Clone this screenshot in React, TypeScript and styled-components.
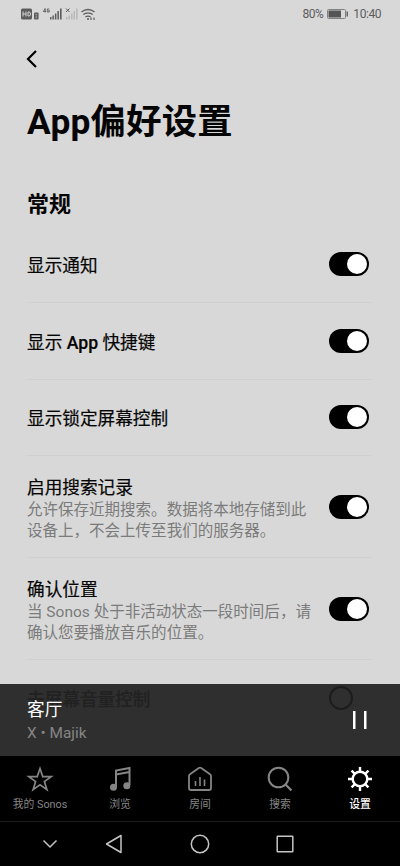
import React from 'react';
import styled, { createGlobalStyle, css } from 'styled-components';

const Global = createGlobalStyle`
  *, *::before, *::after { box-sizing: border-box; }
  body { margin: 0; background: #d8d8d8; }
`;

const Screen = styled.div`
  width: 400px;
  height: 866px;
  display: flex;
  flex-direction: column;
  overflow: hidden;
  background: #d8d8d8;
  color: #050505;
  font-family: Roboto, 'Noto Sans CJK SC', sans-serif;
`;

const StatusBar = styled.header`
  height: 28px;
  flex: none;
  display: flex;
  justify-content: space-between;
  padding: 0 19px 0 20px;
  color: #5c5c5c;
`;

const StatusGroup = styled.div`
  display: flex;
  align-items: center;
  gap: 4px;
  font-size: 12px;
  line-height: 28px;
  letter-spacing: -0.45px;
`;

const TopNav = styled.nav`
  height: 62px;
  flex: none;
  display: flex;
  align-items: center;
  padding: 0 25px;
`;

const BackButton = styled.button`
  display: flex;
  padding: 0;
  border: 0;
  background: none;
  color: #000;
`;

const Body = styled.div`
  flex: 1;
  min-height: 0;
  position: relative;
  overflow: hidden;
`;

const PageTitle = styled.h1`
  margin: 0;
  padding: 7px 27px 0;
  height: 92px;
  font-size: 35.3px;
  line-height: 50px;
  font-weight: 700;
  letter-spacing: 0.25px;
  white-space: nowrap;
`;

const SectionTitle = styled.h2`
  margin: 0;
  padding: 1px 27px 0;
  height: 44.5px;
  font-size: 22px;
  line-height: 44px;
  font-weight: 700;
`;

const Row = styled.div<{ $tall?: boolean; $off?: boolean }>`
  height: ${(p) => (p.$tall ? 102 : 76.6)}px;
  margin: 0 28px 0 27px;
  display: flex;
  align-items: center;
  justify-content: space-between;
  border-bottom: 1px solid #d0d0d0;
  padding-right: 3px;
  color: ${(p) => (p.$off ? '#808080' : '#050505')};
`;

const RowText = styled.div`
  padding-top: 4px;
  white-space: nowrap;
`;

const RowTitle = styled.div<{ $strong?: boolean }>`
  font-size: 17.65px;
  line-height: 24px;
  font-weight: ${(p) => (p.$strong ? 500 : 400)};
  -webkit-text-stroke: 0.2px currentColor;
`;

const LatinWord = styled.span`
  font-weight: 500;
`;

const RowNote = styled.div`
  font-size: 15.52px;
  line-height: 20.8px;
  color: #7b7b7b;
`;

const Knob = styled.span<{ $on: boolean }>`
  width: ${(p) => (p.$on ? 20 : 24)}px;
  height: ${(p) => (p.$on ? 20 : 24)}px;
  border-radius: 50%;
  ${(p) =>
    p.$on
      ? css`background: #fff;`
      : css`border: 2px solid #606060;`}
`;

const Track = styled.span<{ $on: boolean }>`
  flex: none;
  width: 40px;
  height: 24px;
  border-radius: 12px;
  display: flex;
  align-items: center;
  justify-content: ${(p) => (p.$on ? 'flex-end' : 'flex-start')};
  padding: ${(p) => (p.$on ? '0 2px' : '0')};
  background: ${(p) => (p.$on ? '#000' : 'transparent')};
`;

const MiniPlayer = styled.section`
  position: absolute;
  left: 0;
  right: 0;
  bottom: 0;
  height: 72px;
  display: flex;
  align-items: center;
  justify-content: space-between;
  padding: 0 32px 0 27px;
  background: rgba(15, 15, 15, 0.845);
  color: #fff;
`;

const PlayerText = styled.div`
  padding-top: 3px;
`;

const RoomName = styled.div`
  font-size: 17.65px;
  line-height: 24px;
`;

const TrackName = styled.div`
  font-size: 15.4px;
  line-height: 23px;
  color: #858585;
`;

const TabBar = styled.nav`
  height: 65px;
  flex: none;
  display: grid;
  grid-template-columns: repeat(5, 1fr);
  background: #000;
`;

const Tab = styled.div<{ $active?: boolean }>`
  display: flex;
  flex-direction: column;
  align-items: center;
  padding-top: 9px;
  color: ${(p) => (p.$active ? '#fff' : '#858585')};
  font-size: 10.8px;
  line-height: 16px;
  font-weight: ${(p) => (p.$active ? 500 : 400)};
  white-space: nowrap;

  svg { margin-bottom: 4px; }
`;

const SystemNav = styled.footer`
  height: 45px;
  flex: none;
  background: #000;
  border-top: 1px solid #1c1c1c;
  color: #c4c4c4;
  display: grid;
  grid-template-columns: 28px 44px 84px 88px 82px;
  align-items: center;
  justify-items: center;

  svg:first-child { grid-column: 2; }
`;

const line = { fill: 'none', stroke: 'currentColor', strokeWidth: 2 } as const;

const Toggle = ({ on }: { on: boolean }) => (
  <Track $on={on} role="switch" aria-checked={on}>
    <Knob $on={on} />
  </Track>
);

const SignalIcons = () => (
  <svg width="78" height="14" viewBox="0 0 78 14" fill="currentColor">
    <rect x="1" y="1.500" width="11" height="11" rx="1.500" />
    <path d="M3 4.500v5M6 4.500v5M3 7h3M8 5v4h1q1.500 0 1.500-2t-1.500-2z" fill="none" stroke="#d8d8d8" strokeWidth="1" />
    <rect x="14" y="5.500" width="4.600" height="7" rx="1" />
    <path d="M15.600 7.500h1.500M15.600 9.200h1.500M15.600 10.800h1.500" stroke="#d8d8d8" strokeWidth=".6" />
    <path d="M25 1.500l-1.600 3h2.600M25.200 1.500v4M29.300 2h-2v3h2V3.500h-1" fill="none" stroke="currentColor" strokeWidth=".9" />
    <path d="M30 10h1.500v2.500H30zM32.400 8.500h1.500v4h-1.500zM34.900 6.500h1.500v6h-1.500zM37.400 4h1.500v8.500h-1.500zM40 1.500h1.600v11H40z" />
    <path d="M46 1.500L49.500 5M49.500 1.500L46 5" stroke="currentColor" strokeWidth="1" />
    <path opacity=".25" d="M46 10h1.500v2.500H46zM48.500 8.500H50v4h-1.500zM51 6.500h1.500v6H51zM53.500 4H55v8.500h-1.500zM56.100 1.500h1.500v11h-1.500z" />
    <path d="M61.500 5q6.500-5 13 0M63.300 7.600q4.700-3.600 9.400 0M65.400 10q2.600-1.800 5.200 0" fill="none" stroke="currentColor" strokeWidth="1.300" />
    <circle cx="68" cy="12" r="1" />
    <path d="M71 10.500v2.500M74 10.500v2.500" stroke="currentColor" strokeWidth="1.200" />
  </svg>
);

const BatteryIcon = () => (
  <svg width="22" height="10" viewBox="0 0 22 10">
    <rect x=".5" y=".5" width="18" height="9" rx="1" fill="none" stroke="#808080" />
    <rect x="1.500" y="1.500" width="12.500" height="7" fill="#555" />
    <rect x="19.500" y="2.500" width="1.500" height="5" fill="#666" />
  </svg>
);

const StarIcon = () => (
  <svg width="28" height="28" viewBox="0 0 28 28" {...line}>
    <path d="M14 3.600l2.700 8h8.500l-6.800 5 2.500 8.100-6.900-4.900-6.900 4.900 2.500-8.100-6.800-5h8.500z" strokeWidth="1.700" />
  </svg>
);

const MusicIcon = () => (
  <svg width="28" height="28" viewBox="0 0 28 28">
    <path d="M10 22V5.500L23.500 3v17M10 9.500L23.500 7" {...line} />
    <circle cx="7.500" cy="22.300" r="3.500" fill="currentColor" />
    <circle cx="20.800" cy="20.700" r="3.500" fill="currentColor" />
  </svg>
);

const RoomsIcon = () => (
  <svg width="28" height="28" viewBox="0 0 28 28" {...line}>
    <path d="M3 11.200Q3 10 4 9.300L12.800 3Q14 2.300 15.200 3L24 9.300Q25 10 25 11.200V23Q25 25 23 25H5Q3 25 3 23z" strokeWidth="1.800" />
    <path d="M9.500 16v5M14 12v9M18.500 14.500v6.500" strokeWidth="1.600" />
  </svg>
);

const SearchIcon = () => (
  <svg width="28" height="28" viewBox="0 0 28 28" {...line}>
    <circle cx="12.500" cy="12.500" r="9.800" />
    <path d="M19.500 19.500l6 6" strokeWidth="2.300" />
  </svg>
);

const GearIcon = () => (
  <svg width="28" height="28" viewBox="0 0 28 28" {...line} strokeWidth={2.4}>
    <circle cx="14" cy="14" r="7.300" />
    <path d="M14 2v5M14 21v5M2 14h5M21 14h5M5.600 5.600l3.200 3.200M19.200 19.200l3.200 3.200M22.400 5.600l-3.200 3.200M8.800 19.200l-3.200 3.200" />
  </svg>
);

const rows = [
  { title: '显示通知' },
  { title: <>显示 <LatinWord>App</LatinWord> 快捷键</> },
  { title: '显示锁定屏幕控制' },
  { title: '启用搜索记录', note: ['允许保存近期搜索。数据将本地存储到此', '设备上，不会上传至我们的服务器。'] },
  { title: '确认位置', note: ['当 Sonos 处于非活动状态一段时间后，请', '确认您要播放音乐的位置。'] },
  { title: '去屏幕音量控制', off: true },
] as { title: React.ReactNode; note?: string[]; off?: boolean }[];

const tabs = [
  { label: '我的 Sonos', Icon: StarIcon },
  { label: '浏览', Icon: MusicIcon },
  { label: '房间', Icon: RoomsIcon },
  { label: '搜索', Icon: SearchIcon },
  { label: '设置', Icon: GearIcon },
];

export default function App() {
  return (
    <Screen>
      <Global />
      <StatusBar>
        <StatusGroup><SignalIcons /></StatusGroup>
        <StatusGroup>
          <span>80%</span>
          <BatteryIcon />
          <span>10:40</span>
        </StatusGroup>
      </StatusBar>
      <TopNav>
        <BackButton aria-label="返回">
          <svg width="14" height="20" viewBox="0 0 14 20" {...line}>
            <path d="M11 2L3 10l8 8" strokeWidth="2.200" />
          </svg>
        </BackButton>
      </TopNav>
      <Body>
        <PageTitle>App偏好设置</PageTitle>
        <SectionTitle>常规</SectionTitle>
        {rows.map((row, index) => (
          <Row key={index} $tall={!!row.note} $off={row.off}>
            <RowText>
              <RowTitle $strong={row.off}>{row.title}</RowTitle>
              {row.note?.map((text) => <RowNote key={text}>{text}</RowNote>)}
            </RowText>
            <Toggle on={!row.off} />
          </Row>
        ))}
        <MiniPlayer>
          <PlayerText>
            <RoomName>客厅</RoomName>
            <TrackName>X • Majik</TrackName>
          </PlayerText>
          <svg width="16" height="20" viewBox="0 0 16 20" fill="#fff">
            <rect x="1" y="1" width="2.500" height="18" />
            <rect x="12" y="1" width="2.500" height="18" />
          </svg>
        </MiniPlayer>
      </Body>
      <TabBar>
        {tabs.map(({ label, Icon }) => (
          <Tab key={label} $active={label === '设置'}>
            <Icon />
            <span>{label}</span>
          </Tab>
        ))}
      </TabBar>
      <SystemNav>
        <svg width="16" height="10" viewBox="0 0 16 10" {...line} strokeWidth={1.5}>
          <path d="M1.500 1.500L8 8l6.500-6.500" />
        </svg>
        <svg width="18" height="20" viewBox="0 0 18 20" {...line} strokeWidth={1.5}>
          <path d="M16 1.500v17L1.500 10z" strokeLinejoin="round" />
        </svg>
        <svg width="20" height="20" viewBox="0 0 20 20" {...line} strokeWidth={1.5}>
          <circle cx="10" cy="10" r="8.700" />
        </svg>
        <svg width="18" height="18" viewBox="0 0 18 18" {...line} strokeWidth={1.5}>
          <rect x="1.200" y="1.200" width="15.600" height="15.600" rx=".5" />
        </svg>
      </SystemNav>
    </Screen>
  );
}
